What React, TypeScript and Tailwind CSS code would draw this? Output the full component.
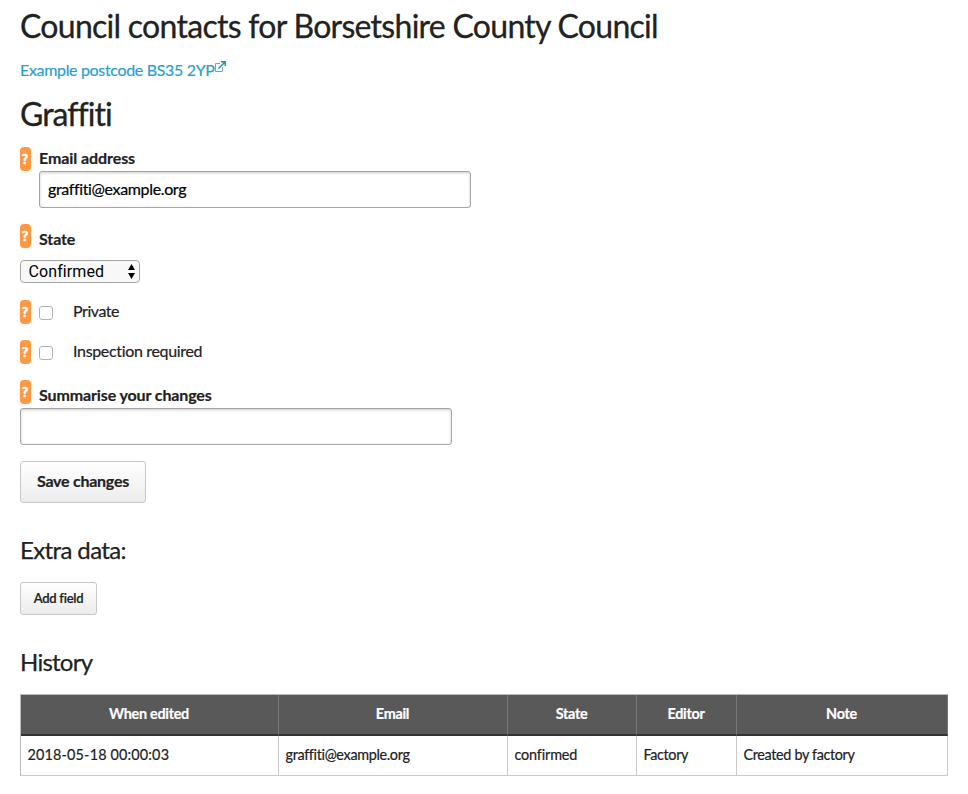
import React from "react";

function Help() {
  return (
    <span className="flex h-6 w-[11px] shrink-0 items-center justify-center rounded-[4px] bg-[#ff9843] pr-px text-[14px] font-black leading-none text-white [-webkit-text-stroke:0.5px_white]">
      ?
    </span>
  );
}

function CheckRow({ label, className, tracking }: { label: string; className: string; tracking: string }) {
  return (
    <div className={`flex h-6 ${className}`}>
      <Help />
      <input
        type="checkbox"
        aria-label={label}
        className="ml-2 mt-1.5 h-3.5 w-3.5 appearance-none rounded-[3px] border border-[#b0b0b0] bg-white"
      />
      <span className={`ml-5 text-[16px] leading-[22px] ${tracking}`}>{label}</span>
    </div>
  );
}

const field =
  "block h-[37px] w-[432px] rounded-[3px] border border-[#a5a5a5] bg-white px-2 pb-0.5 text-[16px] text-black shadow-[inset_0_1px_3px_rgba(0,0,0,0.2)] outline-none";
const button =
  "block rounded-[3px] border border-[#c8c8c8] bg-linear-to-b from-white to-[#ececec] whitespace-nowrap";

const columns = [
  { title: "When edited", value: "2018-05-18 00:00:03", body: "tracking-[0.17px]" },
  { title: "Email", value: "graffiti@example.org", body: "tracking-[-0.33px]" },
  { title: "State", value: "confirmed", body: "tracking-[-0.15px]" },
  { title: "Editor", value: "Factory", body: "tracking-[-0.35px]" },
  { title: "Note", value: "Created by factory", body: "tracking-[-0.34px]" },
];

export default function App() {
  return (
    <main className="h-[794px] w-[968px] overflow-hidden bg-white px-5 pt-1.5 font-['Lato',sans-serif] text-[#222] [-webkit-text-stroke:0.2px]">
      <h1 className="h-10 whitespace-nowrap text-[32px] leading-10 tracking-[-0.72px] [-webkit-text-stroke:0.3px]">
        Council contacts for Borsetshire County Council
      </h1>
      <a href="#" className="mt-3 flex h-6 text-[16px] leading-6 tracking-[-0.33px] text-[#2aa0cd]">
        Example postcode BS35 2YP
        <svg className="mt-[3px]" width="11" height="11" viewBox="0 0 11 11" fill="none">
          <path d="M5 2.5H0.5v8h7V6" stroke="#999" />
          <path d="M3.500 7.500L9.500 1.500M6 0.750h4.250V5" stroke="#0f98c8" strokeWidth="1.500" />
        </svg>
      </a>
      <h2 className="mt-3 h-10 text-[32px] leading-10 tracking-[-0.95px] [-webkit-text-stroke:0.3px]">Graffiti</h2>

      <div className="mt-[13px] flex h-6">
        <Help />
        <label className="ml-2 text-[16px] font-bold leading-[22px] tracking-[-0.08px]">Email address</label>
      </div>
      <input className={`ml-[19px] tracking-[-0.36px] ${field}`} defaultValue="graffiti@example.org" />

      <div className="mt-4 flex h-9">
        <Help />
        <label className="ml-2 mt-1 text-[16px] font-bold leading-[22px] tracking-[-0.1px]">State</label>
      </div>
      <button className="flex h-[23px] w-[120px] items-center justify-between rounded-[4px] border border-[#a5a5a5] bg-[#f8f8f8] pl-[7.5px] pr-1 text-[16px] leading-none text-black">
        <span className="font-['Roboto',sans-serif] tracking-[0.1px] [-webkit-text-stroke:0px]">Confirmed</span>
        <svg width="7" height="15" viewBox="0 0 7 15">
          <path d="M3.500 0L7 6H0zM3.500 15L0 9h7z" fill="#000" />
        </svg>
      </button>

      <CheckRow label="Private" className="mt-[17px]" tracking="tracking-[-0.45px]" />
      <CheckRow label="Inspection required" className="mt-4" tracking="tracking-[-0.33px]" />

      <div className="mt-4 flex h-7">
        <Help />
        <label className="ml-2 mt-1 text-[16px] font-bold leading-[22px] tracking-[-0.12px]">
          Summarise your changes
        </label>
      </div>
      <input className={field} aria-label="Summarise your changes" />

      <button className={`mt-4 h-[42px] w-[126px] pb-0.5 text-[16px] font-bold tracking-[-0.25px] ${button}`}>
        Save changes
      </button>

      <h3 className="mt-8 h-8 text-[24px] leading-[30px] tracking-[-0.62px] [-webkit-text-stroke:0.25px]">Extra data:</h3>
      <button className={`mt-[15px] h-[33px] w-[77px] text-[13px] font-semibold tracking-[-0.25px] ${button}`}>
        Add field
      </button>

      <h3 className="mt-8 h-8 text-[24px] leading-[30px] tracking-[-0.75px] [-webkit-text-stroke:0.25px]">History</h3>
      <table className="mt-[15px] w-[928px] table-fixed border-separate border-spacing-0 border-l border-t border-[#bbb] text-[14.4px]">
        <colgroup>
          <col className="w-[258px]" />
          <col className="w-[229px]" />
          <col className="w-[129px]" />
          <col className="w-[100px]" />
          <col className="w-[211px]" />
        </colgroup>
        <thead>
          <tr className="h-[41px] bg-[#595959] text-white">
            {columns.map((c) => (
              <th
                key={c.title}
                className="border-r border-b-2 border-r-[#777] border-b-[#333] p-0 pr-px pb-0.5 text-center font-bold leading-5 tracking-[-0.28px]"
              >
                {c.title}
              </th>
            ))}
          </tr>
        </thead>
        <tbody>
          <tr className="h-10">
            {columns.map((c) => (
              <td
                key={c.title}
                className={`border-r border-b border-[#c8c8c8] px-[6.5px] pt-0 pb-0.5 leading-5 whitespace-nowrap ${c.body}`}
              >
                {c.value}
              </td>
            ))}
          </tr>
        </tbody>
      </table>
    </main>
  );
}
